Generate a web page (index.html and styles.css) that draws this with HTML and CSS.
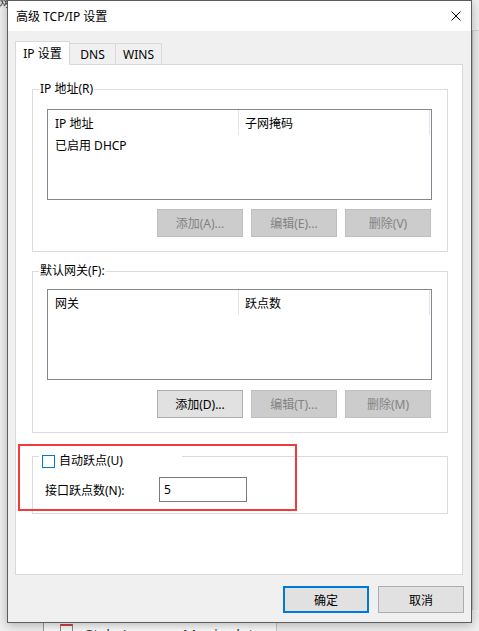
FILE: index.html
```html
<!DOCTYPE html>
<html lang="zh-CN">

<head>
    <meta charset="UTF-8" />
    <meta name="viewport" content="width=device-width, initial-scale=1.0" />
    <title>高级 TCP/IP 设置</title>
    <link rel="stylesheet" href="styles.css">
</head>

<body>
    <div class="screen">
        <!-- window behind the dialog -->
        <div class="backdrop">
            <span class="bg-char">网</span>
            <div class="bg-right"></div>
            <div class="bg-window">
                <div class="bg-item">
                    <span class="bg-icon"></span>
                    <span class="bg-text">Style Lessons Manipulator</span>
                </div>
            </div>
        </div>

        <div class="dialog">
            <div class="titlebar">
                <span class="title">高级 TCP/IP 设置</span>
                <svg class="close" width="10" height="10" viewBox="0 0 10 10">
                    <path d="M0.5 0.5 L9.5 9.5 M9.5 0.5 L0.5 9.5" />
                </svg>
            </div>

            <div class="body">
                <div class="tabs">
                    <div class="tab active">IP 设置</div>
                    <div class="tab">DNS</div>
                    <div class="tab">WINS</div>
                </div>

                <div class="panel">
                    <fieldset class="group group-ip">
                        <legend>IP 地址(R)</legend>
                        <div class="listview">
                            <div class="lv-header">
                                <div class="col">IP 地址</div>
                                <div class="col col-2">子网掩码</div>
                            </div>
                            <div class="lv-row">
                                <div class="col">已启用 DHCP</div>
                            </div>
                        </div>
                        <div class="btn-row">
                            <button class="btn" disabled>添加(A)...</button>
                            <button class="btn" disabled>编辑(E)...</button>
                            <button class="btn" disabled>删除(V)</button>
                        </div>
                    </fieldset>

                    <fieldset class="group group-gw">
                        <legend>默认网关(F):</legend>
                        <div class="listview">
                            <div class="lv-header">
                                <div class="col">网关</div>
                                <div class="col col-2">跃点数</div>
                            </div>
                        </div>
                        <div class="btn-row">
                            <button class="btn">添加(D)...</button>
                            <button class="btn" disabled>编辑(T)...</button>
                            <button class="btn" disabled>删除(M)</button>
                        </div>
                    </fieldset>

                    <fieldset class="group group-metric">
                        <legend><span class="checkbox"></span>自动跃点(U)</legend>
                        <div class="metric-row">
                            <label for="metric">接口跃点数(N):</label>
                            <input type="text" id="metric" class="textbox" value="5" />
                        </div>
                    </fieldset>
                </div>
            </div>

            <div class="footer">
                <button class="btn btn-default">确定</button>
                <button class="btn">取消</button>
            </div>
        </div>

        <!-- red annotation box -->
        <div class="highlight"></div>
    </div>
</body>

</html>
```

FILE: styles.css
```css
* {
    box-sizing: border-box;
}

body {
    margin: 0;
    background: #f0f0f0;
    font-family: "Noto Sans", "Noto Sans CJK SC", sans-serif;
    font-size: 12px;
    color: #000;
    overflow: hidden;
}

.screen {
    position: relative;
    width: 479px;
    height: 631px;
    overflow: hidden;
}

/* background window */
.backdrop {
    position: absolute;
    inset: 0;
}

.bg-char {
    position: absolute;
    left: -2px;
    top: -7px;
    font-size: 12px;
    color: #333;
}

.bg-right {
    position: absolute;
    left: 472px;
    top: 30px;
    width: 10px;
    height: 580px;
    border-top: 1px solid #d4d4d4;
    border-left: 1px solid #c8c8c8;
    background: #e9e9e9;
}

.bg-window {
    position: absolute;
    left: 43px;
    top: 560px;
    width: 234px;
    height: 80px;
    background: #fbfbfb;
    border-left: 1px solid #9a9a9a;
    border-right: 1px solid #c8c8c8;
}

.bg-item {
    display: flex;
    align-items: flex-start;
    gap: 12px;
    padding: 64px 0 0 16px;
}

.bg-icon {
    width: 13px;
    height: 14px;
    border: 1px solid #888;
    border-top: 2px solid #c44;
}

.bg-text {
    font-size: 15px;
    color: #444;
}

/* dialog */
.dialog {
    position: absolute;
    left: 7px;
    top: 0;
    width: 465px;
    height: 623px;
    border: 1px solid #5c5c5c;
    background: #f0f0f0;
    box-shadow: 0 2px 10px rgba(0, 0, 0, 0.28);
    display: flex;
    flex-direction: column;
}

.titlebar {
    height: 30px;
    background: #fff;
    display: flex;
    justify-content: space-between;
    align-items: center;
    padding: 0 10px 1px 8px;
}

.title {
    font-size: 12px;
}

.close path {
    stroke: #000;
    stroke-width: 1;
    fill: none;
}

.body {
    padding: 10px 8px 0 7px;
}

.tabs {
    display: flex;
    align-items: flex-end;
    height: 23px;
}

.tab {
    width: 47px;
    height: 21px;
    margin-left: -1px;
    border: 1px solid #d9d9d9;
    border-bottom: 0;
    display: flex;
    align-items: center;
    justify-content: center;
}

.tab.active {
    width: 55px;
    height: 24px;
    margin-left: 0;
    margin-bottom: -1px;
    padding-bottom: 1px;
    background: #fff;
    position: relative;
    z-index: 1;
}

.panel {
    height: 511px;
    background: #fff;
    border: 1px solid #d9d9d9;
    padding: 0 14px 0 16px;
    display: flex;
    flex-direction: column;
}

/* group boxes */
.group {
    margin: 0;
    min-width: 0;
    border: 1px solid #dcdcdc;
    padding: 0 15px 0 14px;
}

.group legend {
    line-height: 16px;
    padding: 0 1px;
    margin-left: -8px;
}

.group-ip {
    margin-top: 16px;
    padding-top: 12px;
    padding-bottom: 14px;
}

.group-gw {
    margin-top: 11px;
    padding-top: 10px;
    padding-bottom: 14px;
}

.group-metric {
    margin-top: 10px;
    padding: 8px 15px 11px 12px;
}

.group-metric legend {
    width: 143px;
    margin-left: -6px;
    padding: 10px 0 0 3px;
    display: flex;
    align-items: center;
    gap: 4px;
}

.checkbox {
    width: 13px;
    height: 13px;
    border: 1px solid #0078d7;
    background: #fff;
}

/* list views */
.listview {
    width: 385px;
    height: 91px;
    border: 1px solid #828790;
    background: #fff;
}

.lv-header {
    display: flex;
    height: 25px;
}

.lv-header .col {
    width: 191px;
    border-right: 1px solid #e5e5e5;
    display: flex;
    align-items: center;
    padding-left: 7px;
}

.lv-header .col-2 {
    padding-left: 6px;
}

.lv-row {
    height: 20px;
    display: flex;
    align-items: center;
    padding-left: 7px;
}

/* buttons */
.btn-row {
    display: flex;
    justify-content: flex-end;
    gap: 8px;
    margin-top: 9px;
    padding-right: 1px;
}

.group-gw .btn-row {
    margin-top: 10px;
}

.btn {
    width: 86px;
    height: 28px;
    font-family: inherit;
    font-size: 12px;
    color: #000;
    background: #e1e1e1;
    border: 1px solid #adadad;
    padding: 0;
}

.btn:disabled {
    background: #cccccc;
    border-color: #bfbfbf;
    color: #838383;
}

.metric-row {
    display: flex;
    align-items: center;
}

.metric-row label {
    width: 114px;
}

.textbox {
    width: 88px;
    height: 25px;
    border: 1px solid #7a7a7a;
    padding: 0 4px;
    font-family: inherit;
    font-size: 12px;
    color: #000;
    outline: none;
}

.footer {
    display: flex;
    justify-content: flex-end;
    gap: 9px;
    padding: 11px 7px 0 0;
}

.footer .btn {
    height: 27px;
}

.btn-default {
    border: 2px solid #0078d7;
}

.highlight {
    position: absolute;
    left: 18px;
    top: 444px;
    width: 279px;
    height: 67px;
    border: 2px solid #f03a3c;
    pointer-events: none;
}
```
